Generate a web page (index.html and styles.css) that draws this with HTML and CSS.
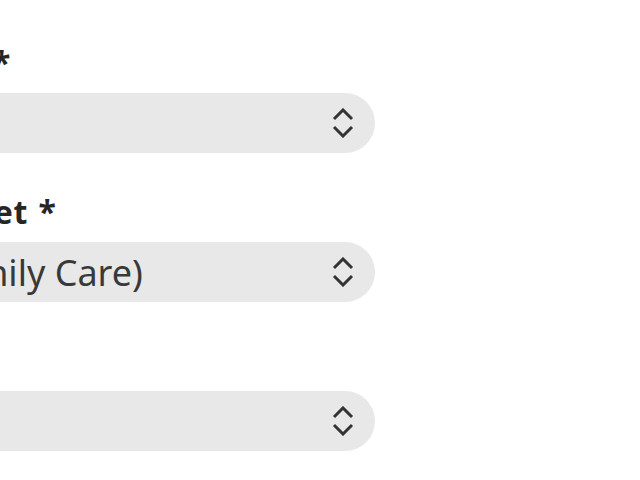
FILE: index.html
```html
<!DOCTYPE html>
<html lang="en">

<head>
  <title>care request</title>
  <meta name="viewport" content="width=device-width, initial-scale=1" />
  <meta charset="UTF-8" />
  <link rel="stylesheet" href="styles.css">
</head>

<body>
  <form class="form">
    <div class="field">
      <label class="label" for="service">Service Type *</label>
      <div class="select-wrap">
        <select id="service" class="select">
          <option></option>
        </select>
        <svg class="chevron" width="22" height="30" viewBox="0 0 22 30" aria-hidden="true">
          <path d="M2 11 L11 2 L20 11 M2 19 L11 28 L20 19" />
        </svg>
      </div>
    </div>
    <div class="field">
      <label class="label" for="budget">Respite Budget *</label>
      <div class="select-wrap">
        <select id="budget" class="select">
          <option>Respite (Family Care)</option>
        </select>
        <svg class="chevron" width="22" height="30" viewBox="0 0 22 30" aria-hidden="true">
          <path d="M2 11 L11 2 L20 11 M2 19 L11 28 L20 19" />
        </svg>
      </div>
    </div>
    <div class="field">
      <label class="label" for="notes">Notes</label>
      <div class="select-wrap">
        <select id="notes" class="select">
          <option></option>
        </select>
        <svg class="chevron" width="22" height="30" viewBox="0 0 22 30" aria-hidden="true">
          <path d="M2 11 L11 2 L20 11 M2 19 L11 28 L20 19" />
        </svg>
      </div>
    </div>
  </form>
</body>

</html>
```

FILE: styles.css
```css
body {
  margin: 0;
  background-color: #ffffff;
  color: #393939;
  font-family: 'Noto Sans', sans-serif;
  overflow: hidden;
}

.form {
  display: flex;
  flex-direction: column;
  gap: 36px;
  margin-left: -224px;
  padding-top: 40px;
  width: 599px;
}

.field {
  display: flex;
  flex-direction: column;
  gap: 8px;
}

.label {
  font-size: 32px;
  font-weight: bold;
  line-height: 45px;
  height: 45px;
  color: #262626;
  letter-spacing: 0.5px;
  word-spacing: 2px;
  white-space: nowrap;
}

.select-wrap {
  position: relative;
}

.select {
  appearance: none;
  display: block;
  width: 100%;
  height: 60px;
  border: none;
  border-radius: 0 30px 30px 0;
  background-color: #e8e8e8;
  color: #393939;
  font-family: 'Noto Sans', sans-serif;
  font-size: 36px;
  padding: 0 60px 0 15px;
}

.chevron {
  position: absolute;
  right: 21px;
  top: 15px;
  fill: none;
  stroke: #333333;
  stroke-width: 3;
  pointer-events: none;
}
```
